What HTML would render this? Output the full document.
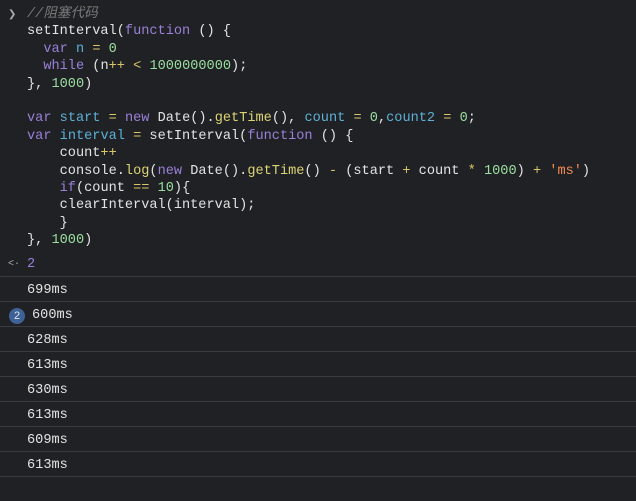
<!DOCTYPE html>
<html><head><meta charset="utf-8"><style>
body{margin:0;width:636px;height:479px;background:#202124;overflow:hidden;font-family:"Liberation Mono","Noto Sans CJK SC",monospace;font-size:13.6px;color:#e3e3e3}
.code{position:absolute;left:27px;top:6px;white-space:pre;line-height:17.4px}
.k{color:#9a80d8}.v{color:#5db0d7}.n{color:#9bdfa0}.o{color:#d9c56a}.f{color:#dcd474}.s{color:#f28b54}.c{color:#7a7a7a;font-style:italic}
.arrow{position:absolute;left:8px;color:#aaa;font-size:10px}
.row{position:absolute;left:0;width:636px;height:24px;border-top:1px solid #3a3b3e}
.row span{position:absolute;left:27px;top:6px}
.badge{position:absolute;left:9px;top:6px;width:16px;height:16px;border-radius:50%;background:#3f6296;color:#dfe6f0;font-size:11px;text-align:center;line-height:16px;font-family:"Liberation Sans",sans-serif}
</style></head><body>
<div class="arrow" style="top:9px">&#x276F;</div>
<div class="code"><span class="c">//阻塞代码</span>
setInterval(<span class="k">function</span> () {
  <span class="k">var</span> <span class="v">n</span> <span class="o">=</span> <span class="n">0</span>
  <span class="k">while</span> (n<span class="o">++</span> <span class="o">&lt;</span> <span class="n">1000000000</span>);
}, <span class="n">1000</span>)

<span class="k">var</span> <span class="v">start</span> <span class="o">=</span> <span class="k">new</span> Date().<span class="f">getTime</span>(), <span class="v">count</span> <span class="o">=</span> <span class="n">0</span>,<span class="v">count2</span> <span class="o">=</span> <span class="n">0</span>;
<span class="k">var</span> <span class="v">interval</span> <span class="o">=</span> setInterval(<span class="k">function</span> () {
    count<span class="o">++</span>
    console.<span class="f">log</span>(<span class="k">new</span> Date().<span class="f">getTime</span>() <span class="o">-</span> (start <span class="o">+</span> count <span class="o">*</span> <span class="n">1000</span>) <span class="o">+</span> <span class="s">'ms'</span>)
    <span class="k">if</span>(count <span class="o">==</span> <span class="n">10</span>){
    clearInterval(interval);
    }
}, <span class="n">1000</span>)</div>
<div class="arrow" style="top:259px">&lt;·</div>
<div style="position:absolute;left:27px;top:257px;color:#9a80d8">2</div>
<div class="row" style="top:276px"><span>699ms</span></div>
<div class="row" style="top:301px"><div class="badge">2</div><span style="left:32px">600ms</span></div>
<div class="row" style="top:326px"><span>628ms</span></div>
<div class="row" style="top:351px"><span>613ms</span></div>
<div class="row" style="top:376px"><span>630ms</span></div>
<div class="row" style="top:401px"><span>613ms</span></div>
<div class="row" style="top:426px"><span>609ms</span></div>
<div class="row" style="top:451px"><span>613ms</span></div>
<div class="row" style="top:476px"></div>
</body></html>
